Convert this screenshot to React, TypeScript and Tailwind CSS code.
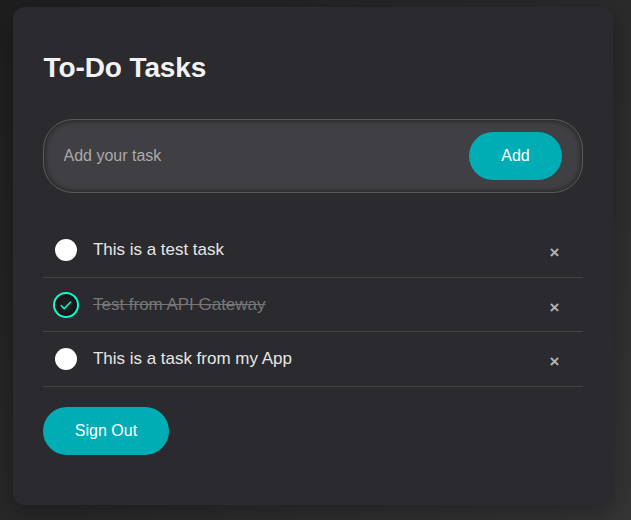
const tasks = [
  { text: 'This is a test task', done: false },
  { text: 'Test from API Gateway', done: true },
  { text: 'This is a task from my App', done: false },
];

function Marker({ done }: { done: boolean }) {
  if (!done) {
    return <span className="mx-0.5 size-[22px] shrink-0 rounded-full bg-white" />;
  }
  return (
    <span className="flex size-[26px] shrink-0 items-center justify-center rounded-full border-2 border-[#08fdd0] bg-[#202022] shadow-[inset_0_0_6px_#000]">
      <svg width="14" height="14" viewBox="0 0 14 14" fill="none" stroke="#08fdd0" strokeWidth="1.5">
        <path d="M1.8 7.3 5.2 10.6 12 3.8" />
      </svg>
    </span>
  );
}

export default function App() {
  return (
    <div className="h-[520px] w-[631px] overflow-hidden bg-linear-135 from-[#1e1e1e] to-[#353535] pl-[13px] pt-[7px] font-['Liberation_Sans',Arial,sans-serif]">
      <main className="h-[498px] w-[600px] rounded-xl bg-[#2b2a2e] px-[30px] pt-[40px] shadow-[0_8px_24px_rgba(0,0,0,0.3)]">
        <h1 className="h-[72px] pl-[0.5px] text-[28px] leading-[41px] font-bold tracking-[-0.1px] text-[#f2f2f2]">
          To-Do Tasks
        </h1>
        <form className="flex h-[74px] items-center justify-between rounded-[30px] border border-[#5a5a5a] bg-[#403f43] pr-5 pl-[19.5px] shadow-[inset_0_0_6px_rgba(0,0,0,0.6)]">
          <input
            className="w-80 bg-transparent text-base text-white outline-none placeholder:text-[#aaaaaa]"
            placeholder="Add your task"
          />
          <button type="button" className="h-12 w-[93px] rounded-3xl bg-[#00adb5] text-base text-white">
            Add
          </button>
        </form>
        <ul className="mt-[30.6px]">
          {tasks.map((task) => (
            <li key={task.text} className="flex h-[54.4px] items-center border-b border-[#444444] pl-2.5">
              <Marker done={task.done} />
              <span
                className={
                  task.done
                    ? 'mb-[0.4px] ml-3.5 flex-1 text-[17px] tracking-[-0.02px] text-[#777777] line-through'
                    : 'mb-[0.4px] ml-3.5 flex-1 text-[17px] tracking-[-0.02px] text-[#e6e6e6]'
                }
              >
                {task.text}
              </span>
              <span className="mt-[5.6px] mr-[23.5px] text-[17px] font-bold text-[#b4b4b4]">×</span>
            </li>
          ))}
        </ul>
        <button type="button" className="mt-5 h-12 w-[126px] rounded-3xl bg-[#00adb5] text-base text-white">
          Sign Out
        </button>
      </main>
    </div>
  );
}
